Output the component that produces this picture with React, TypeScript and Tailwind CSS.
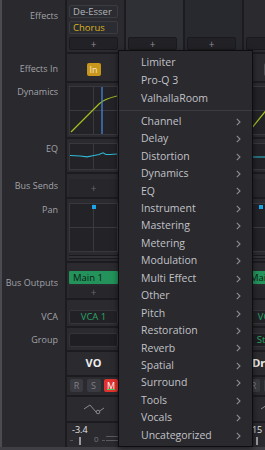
import React from "react"

type StripData = {
  bg: string
  effects: boolean
  inOn: boolean
  curve: string
  knee?: number
  eq: string
  panX: number
  vca: string
  group: string
  name: string
  level: string
}

const Grid = () => (
  <>
    <line x1="23.5" y1="0" x2="23.5" y2="47" stroke="#3a3b40" strokeWidth="1" />
    <line x1="0" y1="23.5" x2="47" y2="23.5" stroke="#3a3b40" strokeWidth="1" />
  </>
)

const PlusBox = ({ className }: { className: string }) => (
  <div className={`flex w-[49px] items-center justify-center rounded-[2px] text-[10px] leading-none ${className}`}>+</div>
)

const Strip = ({ s, hidden }: { s: StripData; hidden?: boolean }) => {
  const row = "shrink-0 border-b-2 border-[#1c1c20] pl-[2px]"
  return (
    <div className={`flex w-[59px] shrink-0 flex-col border-l-2 border-[#1c1c20] ${s.bg}`}>
      {/* effects */}
      <div className={`${row} flex h-[54px] flex-col justify-end gap-[3px] pb-[2px]`}>
        {s.effects && (
          <>
            <div className="h-[13px] w-[49px] rounded-[2px] border border-[#3b3c42] bg-[#2b2c31] pl-[3px] text-[9.5px] leading-[11px] text-[#b4b4b9]">
              De-Esser
            </div>
            <div className="h-[13px] w-[49px] rounded-[2px] border border-[#3b3c42] bg-[#2b2c31] pl-[3px] text-[9.5px] leading-[11px] text-[#d9b21e]">
              Chorus
            </div>
          </>
        )}
        <PlusBox className="h-[13px] border border-[#1a1a1e] bg-[#222226] text-[#8e8e93]" />
      </div>

      {hidden ? (
        <div className="flex-1" />
      ) : (
        <>
          {/* effects in */}
          <div className={`${row} h-[29px] pt-[9px]`}>
            <div className="flex w-[49px] justify-center">
              <div
                className={`flex h-[13px] w-[14px] items-center justify-center rounded-[2px] text-[9px] leading-none ${
                  s.inOn ? "bg-[#c8961b] text-[#f6e8c6]" : "bg-[#4d4e54] text-[#9a9a9f]"
                }`}
              >
                In
              </div>
            </div>
          </div>

          {/* dynamics */}
          <div className={`${row} h-[56px] pt-[3px]`}>
            <div className="h-[49px] w-[49px] border border-[#38393e] bg-[#222227]">
              <svg width="47" height="47" viewBox="0 0 47 47">
                <Grid />
                <path d={s.curve} fill="none" stroke="#a3c21e" strokeWidth="1.2" />
                {s.knee !== undefined && (
                  <line x1={s.knee} y1="0" x2={s.knee} y2="47" stroke="#4a8ee8" strokeWidth="1.2" />
                )}
              </svg>
            </div>
          </div>

          {/* eq */}
          <div className={`${row} h-[35px] pt-[4px]`}>
            <div className="h-[27px] w-[49px] border border-[#38393e] bg-[#222227]">
              <svg width="47" height="25" viewBox="0 0 47 25">
                <line x1="23.5" y1="0" x2="23.5" y2="25" stroke="#3a3b40" strokeWidth="1" />
                <path d={s.eq} fill="none" stroke="#2fb9d4" strokeWidth="1.2" />
              </svg>
            </div>
          </div>

          {/* bus sends */}
          <div className={`${row} h-[25px] pt-[5px]`}>
            <PlusBox className="h-[18px] bg-[#26262b] text-[#66666c]" />
          </div>

          {/* pan */}
          <div className={`${row} h-[64px] pt-[4px]`}>
            <div className="h-[49px] w-[49px] border border-[#38393e] bg-[#222227]">
              <svg width="47" height="47" viewBox="0 0 47 47">
                <Grid />
                <rect x={s.panX} y="1" width="4" height="4" fill="#1aa6e6" />
              </svg>
            </div>
            <div className="mt-[3px] h-[4px] w-[49px] border-y border-[#1a1a1e] bg-[#303035]" />
          </div>

          {/* bus outputs */}
          <div className={`${row} h-[37px] pt-[8px]`}>
            <div className="h-[13px] w-[49px] rounded-[1px] bg-[#23935b] pl-[4px] text-[9.5px] leading-[13px] text-[#0d1a13]">
              Main 1
            </div>
            <PlusBox className="mt-[2px] h-[12px] bg-[#26262b] text-[#66666c]" />
          </div>

          {/* vca */}
          <div className={`${row} h-[28px] pt-[10px]`}>
            <div className="h-[14px] w-[49px] rounded-[2px] border border-[#34353a] bg-[#222226] text-center text-[9.5px] leading-[12px] text-[#2aa468]">
              {s.vca}
            </div>
          </div>

          {/* group */}
          <div className={`${row} h-[24px] pt-[5px]`}>
            <div className="h-[14px] w-[49px] rounded-[2px] border border-[#34353a] bg-[#1f1f23] text-center text-[9.5px] leading-[12px] text-[#2aa468]">
              {s.group}
            </div>
          </div>

          {/* name */}
          <div className={`${row} flex h-[25px] items-center`}>
            <div className="w-[49px] text-center text-[11px] font-bold text-[#ededed]">{s.name}</div>
          </div>

          {/* r s m */}
          <div className={`${row} h-[20px] pt-[2px]`}>
            <div className="flex w-[49px] justify-between pl-[1px] text-[9px] leading-none">
              <div className="flex h-[13px] w-[13px] items-center justify-center rounded-[2px] bg-[#3a3b40] text-[#7f7f85]">R</div>
              <div className="flex h-[13px] w-[14px] items-center justify-center rounded-[2px] bg-[#3a3b40] text-[#7f7f85]">S</div>
              <div className="relative flex h-[13px] w-[14px] items-center justify-center rounded-[2px] bg-[#e2322f] text-white">
                M
                <div className="absolute bottom-[2px] left-[3px] h-[1.5px] w-[8px] bg-[#3fd35a]" />
              </div>
            </div>
          </div>

          {/* automation */}
          <div className={`${row} flex h-[26px] items-center`}>
            <div className="flex w-[49px] justify-center">
              <svg width="22" height="12" viewBox="0 0 22 12">
                <path d="M1 6 L7 2 L13 9" fill="none" stroke="#8a8a90" strokeWidth="1" />
                <circle cx="15" cy="9" r="1.8" fill="none" stroke="#8a8a90" strokeWidth="1" />
                <path d="M16.6 8 L21 5" fill="none" stroke="#8a8a90" strokeWidth="1" />
              </svg>
            </div>
          </div>

          {/* fader */}
          <div className="flex-1 pl-[2px]">
            <div className="pl-[3px] pt-[1px] text-[9px] leading-[11px] text-[#e4e4e4]">{s.level}</div>
            <div className="flex w-[49px] items-end text-[8px] leading-none text-[#77777d]">
              <div className="mb-[4px] ml-[1px] h-[1px] w-[3px] bg-[#55555b]" />
              <div className="ml-[6px] h-[8px] w-[2px] bg-[#9a9aa0]" />
              <div className="mb-[2px] ml-[13px]">0</div>
              <div className="mb-[4px] ml-[3px] h-[1px] w-[3px] bg-[#55555b]" />
              <div className="ml-[1px] flex flex-1 flex-col gap-[3px] pb-[4px]">
                <div className="h-[1px] bg-[#5a5a60]" />
                <div className="h-[1px] bg-[#5a5a60]" />
              </div>
            </div>
          </div>
        </>
      )}
    </div>
  )
}

const strips: StripData[] = [
  {
    bg: "bg-[#2a2a2f]",
    effects: true,
    inOn: true,
    curve: "M1 45 L29 17 Q34 12 47 9",
    knee: 32,
    eq: "M0 11.5 L10 12 L17 12.8 L24 11.5 L29 10.5 L33 8.8 L36 10.5 L40 10.5 L47 10",
    panX: 22,
    vca: "VCA 1",
    group: "",
    name: "VO",
    level: "-3.4",
  },
  {
    bg: "bg-[#2f3036]",
    effects: false,
    inOn: false,
    curve: "",
    eq: "",
    panX: 22,
    vca: "",
    group: "",
    name: "",
    level: "",
  },
  {
    bg: "bg-[#28292e]",
    effects: false,
    inOn: false,
    curve: "",
    eq: "",
    panX: 22,
    vca: "",
    group: "",
    name: "",
    level: "",
  },
  {
    bg: "bg-[#2a2a2f]",
    effects: false,
    inOn: false,
    curve: "M0 47 L21 21 Q27 14 47 9",
    eq: "M0 13 L47 13",
    panX: 12,
    vca: "VCA 2",
    group: "Stems",
    name: "Drums",
    level: "-15",
  },
]

const Labels = () => {
  const row = "shrink-0 border-b-2 border-transparent pr-[7px] text-right text-[9px] leading-[14px] text-[#a2a2a8]"
  return (
    <div className="flex w-[63px] shrink-0 flex-col bg-[#29292e]">
      <div className={`${row} h-[54px] pt-[9px]`}>Effects</div>
      <div className={`${row} h-[29px] pt-[8px]`}>Effects In</div>
      <div className={`${row} h-[56px] pt-[2px]`}>Dynamics</div>
      <div className={`${row} h-[35px] pt-[3px]`}>EQ</div>
      <div className={`${row} h-[25px] pt-[5px]`}>Bus Sends</div>
      <div className={`${row} h-[64px] pt-[4px]`}>Pan</div>
      <div className={`${row} h-[37px] pt-[13px]`}>Bus Outputs</div>
      <div className={`${row} h-[28px] pt-[10px]`}>VCA</div>
      <div className={`${row} h-[24px] pt-[5px]`}>Group</div>
    </div>
  )
}

const topItems = ["Limiter", "Pro-Q 3", "ValhallaRoom"]
const categories = [
  "Channel",
  "Delay",
  "Distortion",
  "Dynamics",
  "EQ",
  "Instrument",
  "Mastering",
  "Metering",
  "Modulation",
  "Multi Effect",
  "Other",
  "Pitch",
  "Restoration",
  "Reverb",
  "Spatial",
  "Surround",
  "Tools",
  "Vocals",
  "Uncategorized",
]

const Menu = () => (
  <div className="absolute left-[118px] top-[50px] flex h-[397px] w-[135px] flex-col border border-[#0e0e11] bg-[#29292e] pt-[3px] text-[10.5px] text-[#c2c2c7] shadow-[0_2px_6px_rgba(0,0,0,0.5)]">
    {topItems.map((t) => (
      <div key={t} className="flex h-[18px] items-center pl-[22px]">
        {t}
      </div>
    ))}
    <div className="my-[2px] h-[1px] bg-[#3b3b41]" />
    {categories.map((c) => (
      <div key={c} className="flex h-[17.45px] items-center justify-between pl-[22px] pr-[11px]">
        <span>{c}</span>
        <svg width="5" height="8" viewBox="0 0 5 8">
          <path d="M0.8 0.8 L4 4 L0.8 7.2" fill="none" stroke="#8e8e94" strokeWidth="1.1" />
        </svg>
      </div>
    ))}
  </div>
)

export default function App() {
  return (
    <div className="relative flex h-[450px] w-[265px] flex-col overflow-hidden bg-[#29292e] font-['Open_Sans',sans-serif]">
      <div className="flex h-[447px] border-l-2 border-[#4b4b51]">
        <Labels />
        {strips.map((s, i) => (
          <Strip key={i} s={s} hidden={i === 1 || i === 2} />
        ))}
      </div>
      <div className="h-[3px] shrink-0 bg-[#3e3e44]" />
      <Menu />
    </div>
  )
}
